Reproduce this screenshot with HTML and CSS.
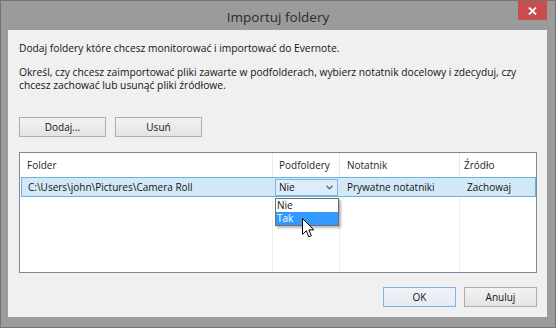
FILE: index.html
```html
<!DOCTYPE html>
<html lang="pl">
<head>
<meta charset="utf-8">
<title>Importuj foldery</title>
<link rel="stylesheet" href="styles.css">
</head>
<body>
<div class="window">
  <div class="titlebar">
    <div class="title">Importuj foldery</div>
    <div class="close" aria-label="Zamknij">
      <svg width="9" height="8" viewBox="0 0 9 8"><path d="M1 0.5 L8 7.5 M8 0.5 L1 7.5" stroke="#fff" stroke-width="1.8" fill="none"/></svg>
    </div>
  </div>
  <div class="client">
    <p class="intro">Dodaj foldery które chcesz monitorować i importować do Evernote.</p>
    <p class="intro second">Określ, czy chcesz zaimportować pliki zawarte w podfolderach, wybierz notatnik docelowy i zdecyduj, czy<br>chcesz zachować lub usunąć pliki źródłowe.</p>
    <div class="actions">
      <button class="btn btn-wide">Dodaj...</button>
      <button class="btn btn-wide">Usuń</button>
    </div>
    <div class="list">
      <div class="cols head">
        <div class="hcell">Folder</div>
        <div class="hcell">Podfoldery</div>
        <div class="hcell">Notatnik</div>
        <div class="hcell last">Źródło</div>
      </div>
      <div class="cols selrow">
        <div class="rcell">C:\Users\john\Pictures\Camera Roll</div>
        <div class="rcell combo-cell">
          <div class="combo">
            <span>Nie</span>
            <svg class="chev" width="7" height="5" viewBox="0 0 7 5"><path d="M0.5 0.8 L3.5 3.8 L6.5 0.8" stroke="#4d6d8f" stroke-width="1.3" fill="none"/></svg>
          </div>
        </div>
        <div class="rcell pad7">Prywatne notatniki</div>
        <div class="rcell pad7">Zachowaj</div>
      </div>
      <div class="cols fill">
        <div class="fcell"></div>
        <div class="fcell"></div>
        <div class="fcell"></div>
        <div class="fcell last"></div>
      </div>
      <div class="dropdown">
        <div class="opt">Nie</div>
        <div class="opt active">Tak</div>
      </div>
      <svg class="cursor" width="13" height="21" viewBox="0 0 13 21"><path d="M0.5 0.5 L0.5 16.5 L4.3 12.8 L6.8 18.8 L9.3 17.8 L6.9 11.9 L11.8 11.9 Z" fill="#fff" stroke="#000" stroke-width="1" stroke-linejoin="miter"/></svg>
    </div>
    <div class="footer">
      <button class="btn btn-narrow default">OK</button>
      <button class="btn btn-narrow">Anuluj</button>
    </div>
  </div>
</div>
</body>
</html>
```
FILE: styles.css
```css
* { box-sizing: border-box; }
html, body { margin: 0; padding: 0; }
body { width: 556px; height: 328px; overflow: hidden; background: #9a9a9a; }

.window {
  width: 556px;
  height: 328px;
  border: 1px solid #737373;
  background: #9b9b9b;
  display: flex;
  flex-direction: column;
  font-family: "Open Sans", "Noto Sans", sans-serif;
}

.titlebar {
  height: 29px;
  display: grid;
  grid-template-columns: 1fr auto 1fr;
  align-items: start;
}
.title {
  grid-column: 2;
  font-size: 13.5px;
  line-height: 29px;
  padding-top: 2px;
  color: #2c2c2c;
}
.close {
  grid-column: 3;
  justify-self: end;
  width: 29px;
  height: 19px;
  margin-right: 8px;
  background: #c84e4e;
  display: flex;
  align-items: center;
  justify-content: center;
}

.client {
  flex: 1;
  margin: 0 8px 10px 7px;
  background: #f0f0f0;
  padding: 12px 10px 10px 11px;
  display: flex;
  flex-direction: column;
  font-size: 10px;
  color: #141414;
}

.intro {
  margin: 0;
  font-size: 10.25px;
  line-height: 13px;
}
.intro.second { margin-top: 11px; }

.actions {
  display: flex;
  gap: 9px;
  margin-top: 25px;
}

.btn {
  height: 20px;
  font-family: inherit;
  font-size: 10px;
  color: #141414;
  border: 1px solid #adadad;
  background: linear-gradient(#f2f2f2, #e4e4e4);
  padding: 0;
  margin: 0;
}
.btn-wide { width: 87px; }
.btn-narrow { width: 73px; }
.btn.default {
  border-color: #7eb4ea;
  background: linear-gradient(#eef3f7, #e3ebf2);
}

.list {
  position: relative;
  margin-top: 15px;
  height: 121px;
  border: 1px solid #828790;
  background: #fff;
  display: flex;
  flex-direction: column;
}
.cols {
  display: grid;
  grid-template-columns: 253px 67px 120px 1fr;
}
.head { height: 24px; }
.hcell {
  line-height: 24px;
  padding-left: 7px;
  border-right: 1px solid #e8e8e8;
  color: #262626;
}
.hcell:nth-child(2) { padding-left: 6px; }
.hcell.last { border-right: none; padding-left: 4px; }

.selrow {
  height: 20px;
  margin: 0 0 0 1px;
  background: #d3e8f6;
  border: 1px solid #66b5de;
  grid-template-columns: 251px 67px 120px 1fr;
}
.rcell {
  line-height: 18px;
  padding-left: 6px;
  white-space: nowrap;
  overflow: hidden;
}
.pad7 { padding-left: 7px; }
.rcell:last-child { padding-left: 7px; }
.combo-cell { padding-left: 2px; }
.combo {
  margin-top: 1px;
  width: 63px;
  height: 17px;
  border: 1px solid #7eb4ea;
  background: #dcecf9;
  display: flex;
  align-items: center;
  justify-content: space-between;
  padding: 0 4px 0 3px;
  line-height: 15px;
}
.chev { display: block; }

.fill { flex: 1; }
.fcell { border-right: 1px solid #f0f0f0; }
.fcell.last { border-right: none; }

.dropdown {
  position: absolute;
  left: 255px;
  top: 45px;
  width: 64px;
  border: 1px solid #707070;
  background: #fff;
  box-shadow: 2px 2px 2px rgba(0, 0, 0, 0.28);
}
.opt {
  height: 13px;
  line-height: 13px;
  padding-left: 1px;
  color: #141414;
}
.opt.active {
  background: #3399ff;
  color: #fff;
}

.cursor {
  position: absolute;
  left: 282px;
  top: 65px;
}

.footer {
  margin-top: 14px;
  display: flex;
  justify-content: flex-end;
  gap: 8px;
}
```
